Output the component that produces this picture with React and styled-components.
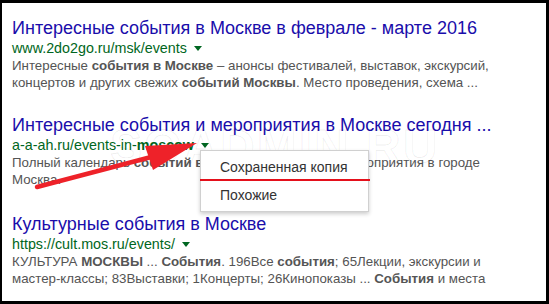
import React from 'react';
import styled, { createGlobalStyle } from 'styled-components';

const GlobalStyle = createGlobalStyle`
  html, body {
    margin: 0;
    padding: 0;
    background: #000;
  }
  body {
    font-family: "Liberation Sans", Arial, sans-serif;
  }
`;

const Frame = styled.div`
  position: relative;
  box-sizing: border-box;
  width: 549px;
  height: 304px;
  background: #fff;
  border-style: solid;
  border-color: #000;
  border-width: 3px 3px 3px 2px;
  padding: 14px 10px 0;
  overflow: hidden;
`;

const Result = styled.div`
  margin-bottom: ${p => p.$gap || 23}px;
`;

const Title = styled.div`
  font-size: 18px;
  line-height: 22px;
  color: #1a0dab;
  white-space: nowrap;
`;

const Url = styled.div`
  font-size: 14.3px;
  line-height: 18px;
  color: #006621;
  white-space: nowrap;

  b {
    font-weight: bold;
  }
`;

const Caret = styled.span`
  display: inline-block;
  width: 0;
  height: 0;
  margin-left: 7px;
  vertical-align: 2px;
  border-left: 4px solid transparent;
  border-right: 4px solid transparent;
  border-top: 5px solid #006621;
`;

const Snippet = styled.div`
  font-size: 13.3px;
  line-height: 17px;
  color: #545454;
  white-space: nowrap;

  b {
    color: #555;
  }
`;

const Menu = styled.div`
  position: absolute;
  left: 198px;
  top: 147px;
  width: 167px;
  padding: 2px 0;
  background: #fff;
  border: 1px solid #d0d0d0;
  box-shadow: 0 2px 4px rgba(0, 0, 0, 0.2);
  z-index: 2;
`;

const MenuItem = styled.div`
  font-size: 14px;
  line-height: 28px;
  padding-left: 19px;
  color: #333;
  white-space: nowrap;
`;

const Underline = styled.div`
  position: absolute;
  left: -1px;
  right: -2px;
  top: 28px;
  height: 2px;
  background: #e4101b;
`;

const Watermark = styled.div`
  position: absolute;
  left: 108px;
  top: 116px;
  font-size: 48px;
  font-weight: bold;
  letter-spacing: 2px;
  color: rgba(0, 0, 0, 0.02);
  -webkit-text-stroke: 1px rgba(0, 0, 0, 0.07);
  white-space: nowrap;
  z-index: 1;
  pointer-events: none;
`;

const Overlay = styled.svg`
  position: absolute;
  left: -2px;
  top: -3px;
  z-index: 3;
  pointer-events: none;
`;

const Arrow = () => (
  <Overlay width="549" height="304" viewBox="0 0 549 304">
    <line x1="37" y1="187" x2="155" y2="156" stroke="#ee2229" strokeWidth="4.5" strokeLinecap="round" />
    <polygon points="197,143 145,146 153,170" fill="#ee2229" />
  </Overlay>
);

export default function App() {
  return (
    <>
      <GlobalStyle />
      <Frame>
        <Result>
          <Title>Интересные события в Москве в феврале - марте 2016</Title>
          <Url>www.2do2go.ru/msk/events<Caret /></Url>
          <Snippet>
            Интересные <b>события в Москве</b> – анонсы фестивалей, выставок, экскурсий,
            <br />
            концертов и других свежих <b>событий Москвы</b>. Место проведения, схема ...
          </Snippet>
        </Result>
        <Result $gap={25}>
          <Title>Интересные события и мероприятия в Москве сегодня ...</Title>
          <Url>a-a-ah.ru/events-in-<b>moscow</b><Caret /></Url>
          <Snippet>
            Полный календарь <b>событий в Москве</b>. Интересные мероприятия в городе
            <br />
            Москва.
          </Snippet>
        </Result>
        <Result>
          <Title>Культурные события в Москве</Title>
          <Url>https://cult.mos.ru/events/<Caret /></Url>
          <Snippet>
            КУЛЬТУРА <b>МОСКВЫ</b> ... <b>События</b>. 196Все <b>события</b>; 65Лекции, экскурсии и
            <br />
            мастер-классы; 83Выставки; 1Концерты; 26Кинопоказы ... <b>События</b> и места
          </Snippet>
        </Result>
        <Watermark>SOADMIN.RU</Watermark>
        <Menu>
          <MenuItem>Сохраненная копия</MenuItem>
          <MenuItem>Похожие</MenuItem>
          <Underline />
        </Menu>
        <Arrow />
      </Frame>
    </>
  );
}
